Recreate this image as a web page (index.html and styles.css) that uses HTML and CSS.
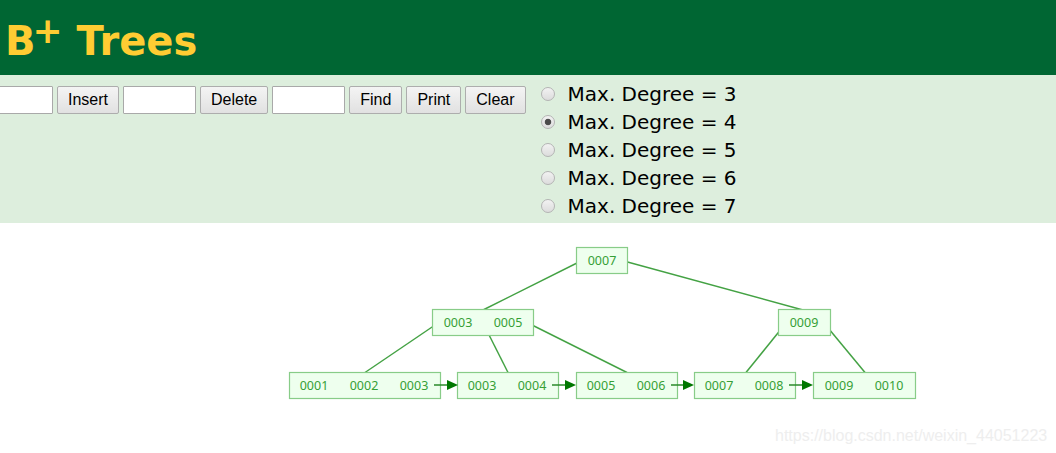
FILE: index.html
```html
<!DOCTYPE html>
<html>
<head>
<meta charset="utf-8">
<title>B+ Trees</title>
<link rel="stylesheet" href="styles.css">
</head>
<body>
<header class="header">
  <h1 class="title">B<span class="sup">+</span> Trees</h1>
</header>
<section class="panel">
  <div class="controls">
    <input class="field" type="text">
    <button class="btn">Insert</button>
    <input class="field" type="text">
    <button class="btn">Delete</button>
    <input class="field" type="text">
    <button class="btn">Find</button>
    <button class="btn">Print</button>
    <button class="btn">Clear</button>
  </div>
  <div class="degrees">
    <label class="degree"><input class="radio" type="radio" name="deg"><span>Max. Degree = 3</span></label>
    <label class="degree"><input class="radio" type="radio" name="deg" checked><span>Max. Degree = 4</span></label>
    <label class="degree"><input class="radio" type="radio" name="deg"><span>Max. Degree = 5</span></label>
    <label class="degree"><input class="radio" type="radio" name="deg"><span>Max. Degree = 6</span></label>
    <label class="degree"><input class="radio" type="radio" name="deg"><span>Max. Degree = 7</span></label>
  </div>
</section>
<main class="canvas">
  <svg class="tree" width="1056" height="230" viewBox="0 223 1056 230">
    <g class="edges">
      <line x1="582" y1="260.5" x2="483" y2="310"/>
      <line x1="622" y1="260.5" x2="803" y2="310"/>
      <line x1="438" y1="323" x2="365" y2="372.5"/>
      <line x1="483" y1="323" x2="508" y2="372.5"/>
      <line x1="528" y1="323" x2="627" y2="372.5"/>
      <line x1="786" y1="323" x2="746" y2="372.5"/>
      <line x1="824" y1="323" x2="865" y2="372.5"/>
    </g>
    <g class="nodes">
      <rect x="576.5" y="247.5" width="51" height="26"/>
      <rect x="432.5" y="309.5" width="101" height="26"/>
      <rect x="778.5" y="309.5" width="52" height="26"/>
      <rect x="289.5" y="372.5" width="151" height="26"/>
      <rect x="457.5" y="372.5" width="101" height="26"/>
      <rect x="576.5" y="372.5" width="101" height="26"/>
      <rect x="694.5" y="372.5" width="101" height="26"/>
      <rect x="813.5" y="372.5" width="102" height="26"/>
    </g>
    <g class="keys">
      <text x="602" y="261.5">0007</text>
      <text x="458" y="323.5">0003</text>
      <text x="508" y="323.5">0005</text>
      <text x="804" y="323.5">0009</text>
      <text x="314" y="386.5">0001</text>
      <text x="364" y="386.5">0002</text>
      <text x="414" y="386.5">0003</text>
      <text x="482" y="386.5">0003</text>
      <text x="532" y="386.5">0004</text>
      <text x="601" y="386.5">0005</text>
      <text x="651" y="386.5">0006</text>
      <text x="719" y="386.5">0007</text>
      <text x="769" y="386.5">0008</text>
      <text x="839" y="386.5">0009</text>
      <text x="889" y="386.5">0010</text>
    </g>
    <g class="links">
      <line x1="434" y1="385" x2="448" y2="385"/>
      <polygon points="447,380 458,385 447,390"/>
      <line x1="552" y1="385" x2="566" y2="385"/>
      <polygon points="565,380 576,385 565,390"/>
      <line x1="671" y1="385" x2="684" y2="385"/>
      <polygon points="683,380 694,385 683,390"/>
      <line x1="789" y1="385" x2="803" y2="385"/>
      <polygon points="802,380 813,385 802,390"/>
    </g>
    <text class="watermark" x="775" y="441">https://blog.csdn.net/weixin_44051223</text>
  </svg>
</main>
</body>
</html>
```
FILE: styles.css
```css
html, body {
  margin: 0;
  padding: 0;
  background: #ffffff;
  overflow: hidden;
}

.header {
  height: 75px;
  background: #006633;
  box-sizing: border-box;
  padding: 18px 0 0 5px;
}

.title {
  margin: 0;
  font-family: "DejaVu Sans", Verdana, sans-serif;
  font-weight: bold;
  font-size: 40px;
  line-height: 46px;
  color: #ffcc33;
}

.sup {
  font-size: 36px;
  vertical-align: 12px;
  line-height: 0;
  margin-left: -3px;
}

.panel {
  height: 148px;
  background: #ddeedd;
  display: flex;
  align-items: flex-start;
  box-sizing: border-box;
  padding-top: 5px;
}

.controls {
  display: flex;
  align-items: center;
  gap: 4px;
  margin-left: -20px;
  margin-top: 6px;
}

.field {
  box-sizing: border-box;
  width: 73px;
  height: 28px;
  margin: 0;
  border: 1px solid #a9a9a9;
  background: #ffffff;
  border-radius: 1px;
  font-family: "Liberation Sans", Arial, sans-serif;
  font-size: 16px;
}

.btn {
  box-sizing: border-box;
  height: 28px;
  margin: 0;
  padding: 0 10px;
  border: 1px solid #adadad;
  border-radius: 2px;
  background: linear-gradient(#f4f4f4, #e1e1e1);
  font-family: "Liberation Sans", Arial, sans-serif;
  font-size: 16px;
  color: #000000;
}

.degrees {
  display: flex;
  flex-direction: column;
  margin-left: 15px;
}

.degree {
  display: flex;
  align-items: center;
  height: 28px;
  font-family: "DejaVu Sans", Verdana, sans-serif;
  font-size: 20px;
  color: #000000;
}

.radio {
  appearance: none;
  -webkit-appearance: none;
  box-sizing: border-box;
  width: 14px;
  height: 14px;
  margin: 0 13px 0 0;
  border: 1px solid #b4b4b4;
  border-radius: 50%;
  background: linear-gradient(#f2f2f2, #dcdcdc);
}

.radio:checked {
  background: radial-gradient(circle at center, #4a4a4a 0, #4a4a4a 2.5px, #6a6a6a 3.2px, transparent 3.6px), linear-gradient(#f2f2f2, #dcdcdc);
}

.canvas {
  display: block;
}

.tree {
  display: block;
}

.edges line {
  stroke: #44a244;
  stroke-width: 1.5;
}

.nodes rect {
  fill: #eeffee;
  stroke: #88cc88;
  stroke-width: 1.2;
}

.keys text {
  font-family: "Noto Sans", "Open Sans", sans-serif;
  font-size: 12.5px;
  fill: #36a036;
  text-anchor: middle;
  dominant-baseline: middle;
}

.links line {
  stroke: #2a8a2a;
  stroke-width: 1.5;
}

.links polygon {
  fill: #007700;
}

.watermark {
  font-family: "Liberation Sans", Arial, sans-serif;
  font-size: 16px;
  fill: #eeeeee;
}
```
